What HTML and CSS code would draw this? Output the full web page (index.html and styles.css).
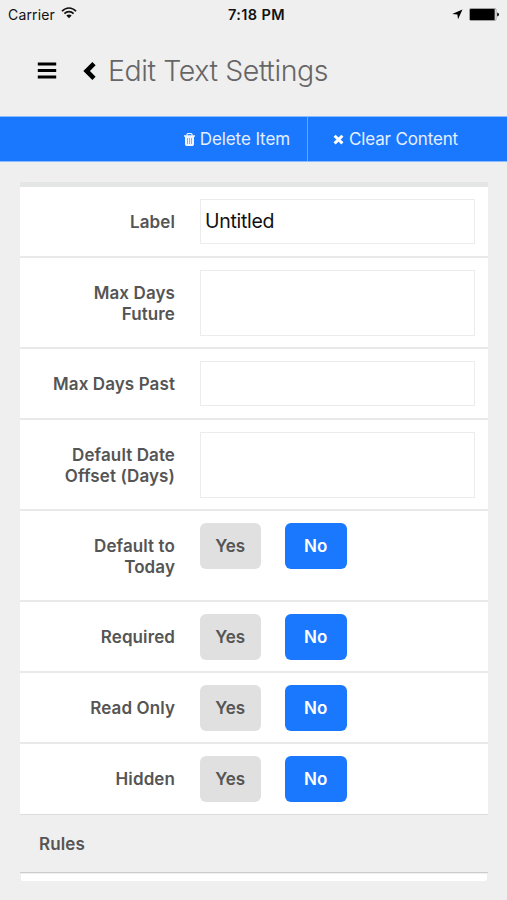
FILE: index.html
```html
<!DOCTYPE html>
<html lang="en">
<head>
<meta charset="utf-8">
<title>Edit Text Settings</title>
<link rel="stylesheet" href="styles.css">
</head>
<body>
<div class="status">
  <div class="carrier"><span>Carrier</span>
    <svg width="16" height="12" viewBox="0 0 16 12" fill="none" stroke="#111" stroke-width="1.7"><path d="M1 4.3C5-.1 11-.1 15 4.3M3.4 6.7C6 4 10 4 12.6 6.7"/><path d="M5.3 8.5C6.9 7 9.1 7 10.7 8.5L8 11.3Z" fill="#111" stroke="none"/></svg>
  </div>
  <div class="time">7:18 PM</div>
  <div class="indicators">
    <svg width="11" height="11" viewBox="0 0 11 11"><path d="M10.5.5 6 10.3 5.4 5.6.2 5Z"/></svg>
    <svg width="31" height="13" viewBox="0 0 31 13"><rect x=".5" y=".5" width="26.5" height="12" rx="1.2" fill="#fff" stroke="#777" stroke-width=".7"/><rect x="1" y="1.1" width="24.7" height="10.8" rx=".5"/><path d="M28.2 4.5Q30 5 30 6.5T28.2 8.5Z"/></svg>
  </div>
</div>
<header class="header">
  <svg class="menu" width="20" height="17" viewBox="0 0 20 17"><path d="M.8 1.9h18.4M.8 8.5h18.4M.8 15.1h18.4" stroke="#000" stroke-width="3"/></svg>
  <svg class="back" width="14" height="20" viewBox="0 0 14 20"><path d="M11 2.6 3.6 10l7.4 7.4" fill="none" stroke="#000" stroke-width="4.6"/></svg>
  <h1>Edit Text Settings</h1>
</header>
<nav class="actions">
  <a class="delete">
    <svg width="11" height="13" viewBox="0 0 11 13"><path d="M3 2.6V1.3L4 .5h3l1 .8v1.3" fill="none" stroke="#edf4ff" stroke-width="1.2"/><path d="M0 2.3h11v1.5H0zM1 3.7h9v8l-1 1.2H2l-1-1.2z" fill="#edf4ff"/><path d="M3.5 5v6M5.5 5v6M7.5 5v6" stroke="#5d9fff" stroke-width=".8"/></svg>
    <span>Delete Item</span>
  </a>
  <a class="clear">
    <svg width="11" height="11" viewBox="0 0 11 11"><path d="m1.6 1.8 7.8 7.6M9.4 1.8 1.6 9.4" stroke="#fff" stroke-width="3"/></svg>
    <span>Clear Content</span>
  </a>
</nav>
<main class="panel">
  <div class="row"><label>Label</label><input type="text" value="Untitled"></div>
  <div class="row tall"><label>Max Days Future</label><input type="text"></div>
  <div class="row"><label>Max Days Past</label><input type="text"></div>
  <div class="row tall"><label>Default Date Offset (Days)</label><input type="text"></div>
  <div class="row tall"><label>Default to Today</label><div class="choices"><button>Yes</button><button class="on">No</button></div></div>
  <div class="row"><label>Required</label><div class="choices"><button>Yes</button><button class="on">No</button></div></div>
  <div class="row"><label>Read Only</label><div class="choices"><button>Yes</button><button class="on">No</button></div></div>
  <div class="row last"><label>Hidden</label><div class="choices"><button>Yes</button><button class="on">No</button></div></div>
  <h2>Rules</h2>
  <div class="rules"></div>
</main>
</body>
</html>
```
FILE: styles.css
```css
* { box-sizing: border-box; }
body { margin: 0; height: 900px; overflow: hidden; background: #efefef; font-family: Inter, sans-serif; color: #555; }
svg { display: block; flex: none; }
.status { height: 28px; padding: 0 7px 0 8px; display: grid; grid-template-columns: 220px auto 1fr; align-items: center; color: #111; font-size: 14px; white-space: nowrap; }
.carrier { display: flex; align-items: center; gap: 6px; letter-spacing: .15px; }
.carrier svg { margin-top: -2px; }
.time { font-weight: 600; font-size: 14.5px; letter-spacing: .4px; }
.indicators { display: flex; align-items: center; justify-content: flex-end; gap: 6px; }
.header { height: 88px; padding: 0 0 3px 37px; display: flex; align-items: center; }
.menu { margin-right: 26px; }
.back { margin-right: 11px; }
h1 { margin: 0; font-size: 28.5px; font-weight: 300; line-height: 34px; letter-spacing: -.4px; color: #666; white-space: nowrap; }
.actions { height: 46px; display: grid; grid-template-columns: 308px 1fr; background: #1a78ff; border: solid #8bbcff; border-width: 1px 0; color: #e4efff; font-size: 17px; white-space: nowrap; }
.actions a { display: flex; align-items: center; }
.delete { justify-content: flex-end; gap: 5px; padding-right: 17px; border-right: 1px solid #65a5ff; letter-spacing: -.1px; }
.clear { gap: 5px; padding-left: 25px; letter-spacing: -.15px; }
.panel { width: 468px; margin: 20px 0 0 20px; border-top: 5px solid #e4e5e5; }
.row { height: 71px; padding: 12px 13px 0 0; display: grid; grid-template-columns: 155px 275px; column-gap: 25px; align-items: start; background: #fff; border-bottom: 2px solid #e9e9e9; }
.tall { height: 91px; }
.last { border-bottom: 1px solid #ddd; }
label { padding: 13px 0 0 25px; font-size: 17px; line-height: 21px; font-weight: 600; letter-spacing: .1px; text-align: right; }
input { width: 275px; height: 45px; padding: 0 4px 2px; border: 1px solid #ececec; background: #fff; font: 19.5px/24px Inter, sans-serif; letter-spacing: -.3px; color: #111; border-radius: 0; }
.tall input { height: 66px; }
.choices { display: flex; gap: 24px; margin-left: -.5px; }
button { width: 61.5px; height: 45.5px; padding: 1px 0 0; border: 0; border-radius: 6px; background: #e0e0e0; color: #555; font: 600 17px/21px Inter, sans-serif; }
.on { background: #1a78ff; color: #fff; }
h2 { height: 58px; margin: 0; padding: 0 19px; border-bottom: 1px solid #ccc; font-size: 17px; font-weight: 600; line-height: 58px; letter-spacing: .1px; }
.rules { height: 7px; margin: 1px 1px 0; background: #fff; border-radius: 0 0 2px 2px; }
```
